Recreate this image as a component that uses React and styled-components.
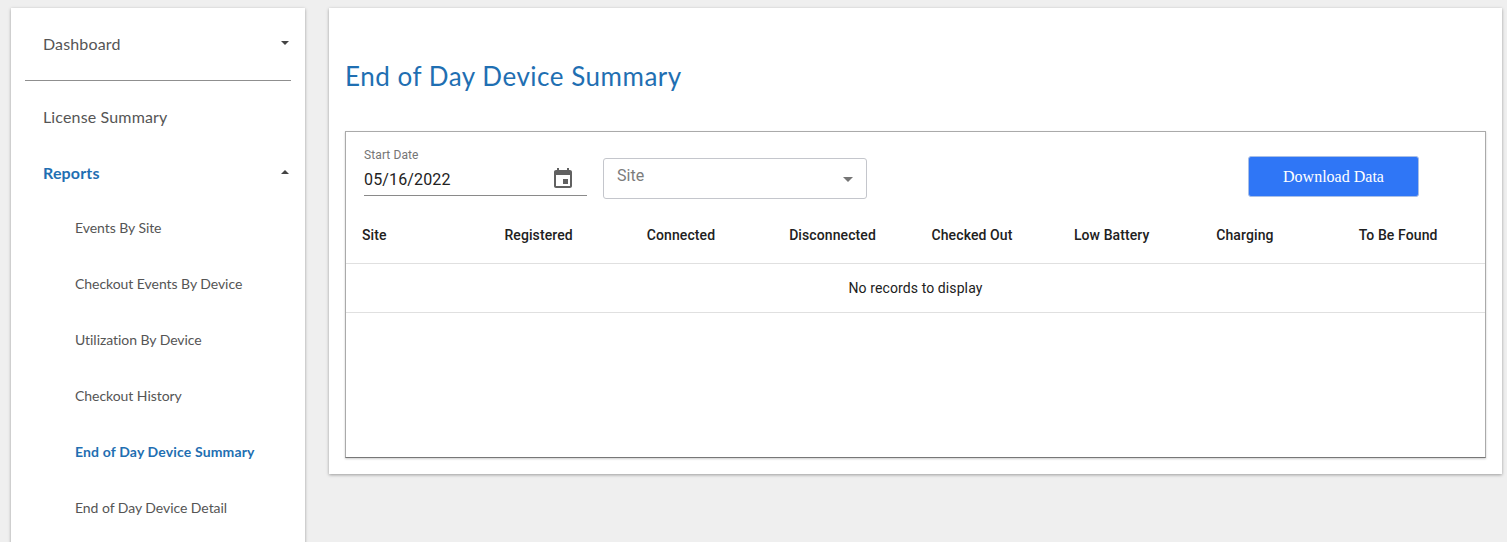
import styled, { createGlobalStyle } from 'styled-components';

const GlobalStyle = createGlobalStyle`
  html, body {
    margin: 0;
    height: 100%;
    overflow: hidden;
    background: #efefef;
  }
  * { box-sizing: border-box; }
`;

const Page = styled.div`
  display: flex;
  align-items: flex-start;
  gap: 24px;
  height: 100vh;
  padding: 8px 5px 0 11px;
  overflow: hidden;
`;

const Sidebar = styled.nav`
  flex: 0 0 294px;
  height: 600px;
  padding: 8px 14px 0;
  background: #fff;
  box-shadow: 0 1px 3px rgba(0, 0, 0, 0.35);
`;

const NavRow = styled.div`
  display: flex;
  align-items: center;
  justify-content: space-between;
  height: 56px;
  padding: 0 2px ${(p) => (p.$sub ? '3px' : '2px')} ${(p) => (p.$sub ? '50px' : '18px')};
  font-family: 'Lato', sans-serif;
  font-size: ${(p) => (p.$sub ? '14px' : '16px')};
  font-weight: ${(p) => (p.$active ? 700 : 400)};
  letter-spacing: ${(p) => {
    if (p.$sub) return p.$active ? '0.15px' : '-0.05px';
    return '0.15px';
  }};
  color: ${(p) => (p.$active ? '#1f6fb2' : '#555')};
`;

const Divider = styled.hr`
  margin: 8px 0;
  border: 0;
  border-top: 1px solid #8f8f8f;
`;

const Caret = styled.span`
  width: 0;
  height: 0;
  border-left: 4px solid transparent;
  border-right: 4px solid transparent;
  border-top: ${(p) => (p.$up ? '0' : '4px solid #444')};
  border-bottom: ${(p) => (p.$up ? '4px solid #444' : '0')};
`;

const Main = styled.main`
  flex: 1;
  height: 466px;
  padding: 0 16px;
  background: #fff;
  box-shadow: 0 1px 3px rgba(0, 0, 0, 0.35);
`;

const Title = styled.h1`
  margin: 0;
  padding-top: 52px;
  height: 123px;
  font-family: 'Lato', sans-serif;
  font-size: 26px;
  line-height: 32px;
  font-weight: 400;
  letter-spacing: 0.52px;
  color: #1f6fb2;
`;

const Panel = styled.section`
  height: 327px;
  border: 1px solid #aaa;
  border-bottom-color: #777;
  box-shadow: 0 1px 2px rgba(0, 0, 0, 0.2);
  font-family: 'Roboto', sans-serif;
`;

const Filters = styled.div`
  display: flex;
  align-items: flex-start;
  height: 82px;
  padding: 17px 66px 0 18px;
`;

const DateField = styled.div`
  position: relative;
  width: 223px;
  height: 47px;
  border-bottom: 1px solid #8a8a8a;
`;

const DateLabel = styled.div`
  font-size: 12px;
  line-height: 12px;
  color: #757575;
  letter-spacing: 0.1px;
`;

const DateValue = styled.div`
  margin-top: 9px;
  font-size: 16px;
  line-height: 20px;
  letter-spacing: 0.15px;
  color: #222;
`;

const CalendarIcon = styled.svg`
  position: absolute;
  right: 12px;
  top: 18px;
  width: 24px;
  height: 24px;
  fill: #616161;
`;

const SiteSelect = styled.div`
  position: relative;
  width: 264px;
  height: 41px;
  margin: 9px 0 0 16px;
  padding: 7px 13px;
  border: 1px solid #c4c6cc;
  border-radius: 3px;
  font-size: 16px;
  line-height: 20px;
  color: #7c7c7c;
`;

const SelectCaret = styled.span`
  position: absolute;
  right: 13px;
  top: 18px;
  border-left: 5px solid transparent;
  border-right: 5px solid transparent;
  border-top: 5px solid #757575;
`;

const DownloadButton = styled.button`
  width: 171px;
  height: 41px;
  margin: 7px 0 0 auto;
  padding: 0;
  background: #2f76f6;
  border: 1px solid #a9bfe6;
  border-radius: 3px;
  font-family: 'Liberation Serif', serif;
  font-size: 16px;
  color: #fff;
`;

const Table = styled.table`
  width: 100%;
  table-layout: fixed;
  border-collapse: collapse;
  font-size: 14px;
  color: #212121;
`;

const HeadCell = styled.th`
  height: 49px;
  padding: 11px 16px 0;
  vertical-align: top;
  line-height: 20px;
  text-align: left;
  font-weight: 500;
  font-size: 14px;
  letter-spacing: 0.1px;
  border-bottom: 1px solid #e0e0e0;
`;

const EmptyCell = styled.td`
  height: 49px;
  text-align: center;
  letter-spacing: 0.1px;
  border-bottom: 1px solid #e0e0e0;
`;

const reports = [
  'Events By Site',
  'Checkout Events By Device',
  'Utilization By Device',
  'Checkout History',
  'End of Day Device Summary',
  'End of Day Device Detail',
];

const columns = [
  'Site',
  'Registered',
  'Connected',
  'Disconnected',
  'Checked Out',
  'Low Battery',
  'Charging',
  'To Be Found',
];

export default function App() {
  return (
    <>
      <GlobalStyle />
      <Page>
        <Sidebar>
          <NavRow>
            Dashboard
            <Caret />
          </NavRow>
          <Divider />
          <NavRow>License Summary</NavRow>
          <NavRow $active>
            Reports
            <Caret $up />
          </NavRow>
          {reports.map((name) => (
            <NavRow key={name} $sub $active={name === 'End of Day Device Summary'}>
              {name}
            </NavRow>
          ))}
        </Sidebar>
        <Main>
          <Title>End of Day Device Summary</Title>
          <Panel>
            <Filters>
              <DateField>
                <DateLabel>Start Date</DateLabel>
                <DateValue>05/16/2022</DateValue>
                <CalendarIcon viewBox="0 0 24 24">
                  <path d="M19 3h-1V1h-2v2H8V1H6v2H5c-1.11 0-2 .9-2 2v14c0 1.1.89 2 2 2h14c1.1 0 2-.9 2-2V5c0-1.1-.9-2-2-2zm0 16H5V8h14v11zM17 12h-5v5h5v-5z" />
                </CalendarIcon>
              </DateField>
              <SiteSelect>
                Site
                <SelectCaret />
              </SiteSelect>
              <DownloadButton>Download Data</DownloadButton>
            </Filters>
            <Table>
              <thead>
                <tr>
                  {columns.map((col) => (
                    <HeadCell key={col}>{col}</HeadCell>
                  ))}
                </tr>
              </thead>
              <tbody>
                <tr>
                  <EmptyCell colSpan={8}>No records to display</EmptyCell>
                </tr>
              </tbody>
            </Table>
          </Panel>
        </Main>
      </Page>
    </>
  );
}
